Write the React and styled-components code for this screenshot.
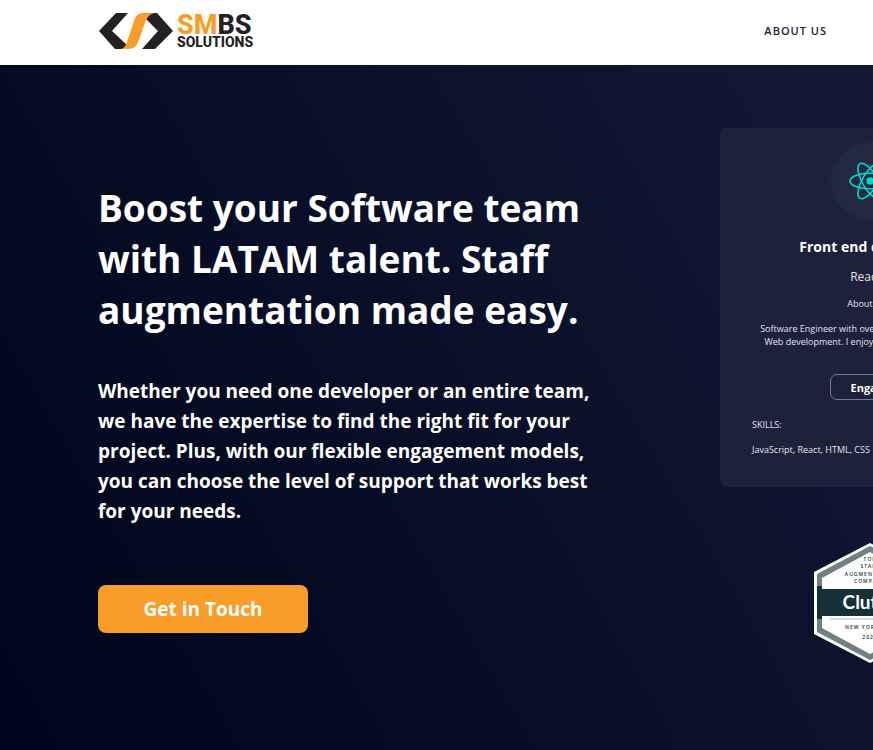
import React from "react";
import styled, { createGlobalStyle } from "styled-components";

const GlobalStyle = createGlobalStyle`
  * { box-sizing: border-box; }
  body {
    margin: 0;
    overflow-x: hidden;
    font-family: "Open Sans", "Noto Sans", sans-serif;
    background: #00051d;
  }
  h1, h2, h3, p { margin: 0; }
`;

const Page = styled.div`
  min-height: 100vh;
  display: flex;
  flex-direction: column;
  overflow: hidden;
`;

const Header = styled.header`
  display: flex;
  align-items: center;
  justify-content: space-between;
  height: 65px;
  padding: 0 46px 3px 98px;
  background: #fff;
`;

const LogoLink = styled.a`
  display: block;
  line-height: 0;
`;

const NavLink = styled.a`
  display: block;
  color: #151d3a;
  font-size: 11px;
  font-weight: 600;
  line-height: 16px;
  letter-spacing: 1px;
  text-decoration: none;
`;

const Hero = styled.main`
  flex: 1;
  display: flex;
  padding: 63px 0 48px 98px;
  background: linear-gradient(60deg, #00041c 0%, #080e27 45%, #131a36 100%);
`;

const HeroInner = styled.div`
  flex: 1 0 auto;
  min-width: 922px;
  display: flex;
  align-items: flex-start;
  justify-content: space-between;
  color: #fff;
`;

const Copy = styled.section`
  width: 500px;
  padding-top: 54px;
`;

const Title = styled.h1`
  font-size: 37px;
  font-weight: 700;
  line-height: 51px;
`;

const Lead = styled.p`
  margin-top: 41px;
  font-size: 19px;
  font-weight: 700;
  line-height: 30px;
`;

const PrimaryButton = styled.button`
  display: block;
  width: 210px;
  height: 48px;
  margin-top: 59px;
  border: 0;
  border-radius: 8px;
  background: #f99d28;
  color: #fff;
  font: 700 19px "Open Sans", sans-serif;
`;

const Aside = styled.aside`
  width: 300px;
  flex: none;
  display: flex;
  flex-direction: column;
  align-items: center;
  gap: 56px;
`;

const Card = styled.article`
  width: 100%;
  padding: 13px 32px 31px;
  border-radius: 8px;
  background: #1d213b;
  text-align: center;
`;

const Avatar = styled.div`
  width: 80px;
  height: 80px;
  margin: 0 auto;
  display: grid;
  place-items: center;
  border: 2px solid #20263d;
  border-radius: 50%;
  background: #242940;
`;

const Role = styled.h2`
  margin-top: 16px;
  font-size: 14px;
  font-weight: 700;
  line-height: 20px;
`;

const Stack = styled.p`
  margin-top: 12px;
  color: #e3e4e9;
  font-size: 12px;
  line-height: 16px;
`;

const Small = styled.p`
  margin-top: 12px;
  color: #e3e4e9;
  font-size: 9px;
  line-height: 13px;
  text-align: ${(p) => (p.$left ? "left" : "center")};
  white-space: nowrap;
`;

const Divider = styled.hr`
  margin: 12px 0 13px;
  border: 0;
  border-top: 1px solid #23263f;
`;

const OutlineButton = styled.button`
  display: block;
  width: 80px;
  height: 26px;
  margin: 0 auto 18px;
  padding: 0;
  border: 1px solid #777b8b;
  border-radius: 7px;
  background: transparent;
  color: #fff;
  font: 700 11px "Open Sans", sans-serif;
`;

function Logo() {
  return (
    <svg width="156" height="40" viewBox="0 0 156 40" role="img" aria-label="SMBS Solutions">
      <path d="M1 20 18 2h12L14 20l15 14-4 4h-8z" fill="#242122" />
      <path d="M75 20 59 2h-6l-5 6 12 12-16 18h13z" fill="#242122" />
      <path d="M23 38c4-1 5-4 7-10l6-18c2-6 5-8 10-8h11c-6 1-8 4-10 10l-6 17c-2 6-5 9-11 9z" fill="#f99d28" />
      <text x="79" y="23" fontFamily="Roboto" fontWeight="800" fontSize="27" fill="#f99d28">
        SM<tspan fill="#242122">BS</tspan>
      </text>
      <text x="79" y="36" fontFamily="Roboto" fontWeight="800" fontSize="14" fill="#242122">SOLUTIONS</text>
    </svg>
  );
}

function ReactIcon() {
  return (
    <svg width="44" height="40" viewBox="-22 -20 44 40" fill="none" stroke="#00d8cf" strokeWidth="1.6" aria-hidden="true">
      <ellipse rx="20" ry="7.7" />
      <ellipse rx="20" ry="7.7" transform="rotate(60)" />
      <ellipse rx="20" ry="7.7" transform="rotate(120)" />
      <circle r="3.7" fill="#00d8cf" stroke="none" />
    </svg>
  );
}

function ClutchBadge() {
  return (
    <svg width="112" height="120" viewBox="0 0 112 120" fontFamily="Open Sans" textAnchor="middle" role="img" aria-label="Clutch award">
      <path d="M56 0 112 29V91L56 120 0 91V29z" fill="#fff" />
      <path d="M56 3 109 31V89L56 117 3 89V31z" fill="#708183" />
      <path d="M56 9 104 35V85L56 111 8 85V35z" fill="#fff" />
      <path d="M3 43H8V46H104V43H109V76H104V73H8V76H3z" fill="#172f37" />
      <path d="M16 76H96" stroke="#a8b0b2" />
      <g fill="#172f37" fontSize="5" fontWeight="600" letterSpacing="1">
        <text x="56" y="18">TOP</text>
        <text x="56" y="25">STAFF</text>
        <text x="57" y="33">AUGMENTATION</text>
        <text x="56" y="40">COMPANY</text>
        <text x="56" y="86">NEW YORK, NY.</text>
        <text x="56" y="96">2023</text>
      </g>
      <text x="56" y="66" fill="#fff" fontFamily="Lato" fontSize="19" fontWeight="700">Clutch</text>
    </svg>
  );
}

export default function App() {
  return (
    <Page>
      <GlobalStyle />
      <Header>
        <LogoLink href="#home"><Logo /></LogoLink>
        <nav><NavLink href="#about">ABOUT US</NavLink></nav>
      </Header>
      <Hero>
        <HeroInner>
          <Copy>
            <Title>Boost your Software team with LATAM talent. Staff augmentation made easy.</Title>
            <Lead>
              Whether you need one developer or an entire team, we have the expertise to find the
              right fit for your project. Plus, with our flexible engagement models, you can choose
              the level of support that works best for your needs.
            </Lead>
            <PrimaryButton type="button">Get in Touch</PrimaryButton>
          </Copy>
          <Aside>
            <Card>
              <Avatar><ReactIcon /></Avatar>
              <Role>Front end developer</Role>
              <Stack>Reactjs</Stack>
              <Small>About Me :</Small>
              <Small>Software Engineer with over 5 years of experience in<br />Web development. I enjoy building new user tools.</Small>
              <Divider />
              <OutlineButton type="button">Engage</OutlineButton>
              <Small $left>SKILLS:</Small>
              <Small $left>JavaScript, React, HTML, CSS</Small>
            </Card>
            <ClutchBadge />
          </Aside>
        </HeroInner>
      </Hero>
    </Page>
  );
}
